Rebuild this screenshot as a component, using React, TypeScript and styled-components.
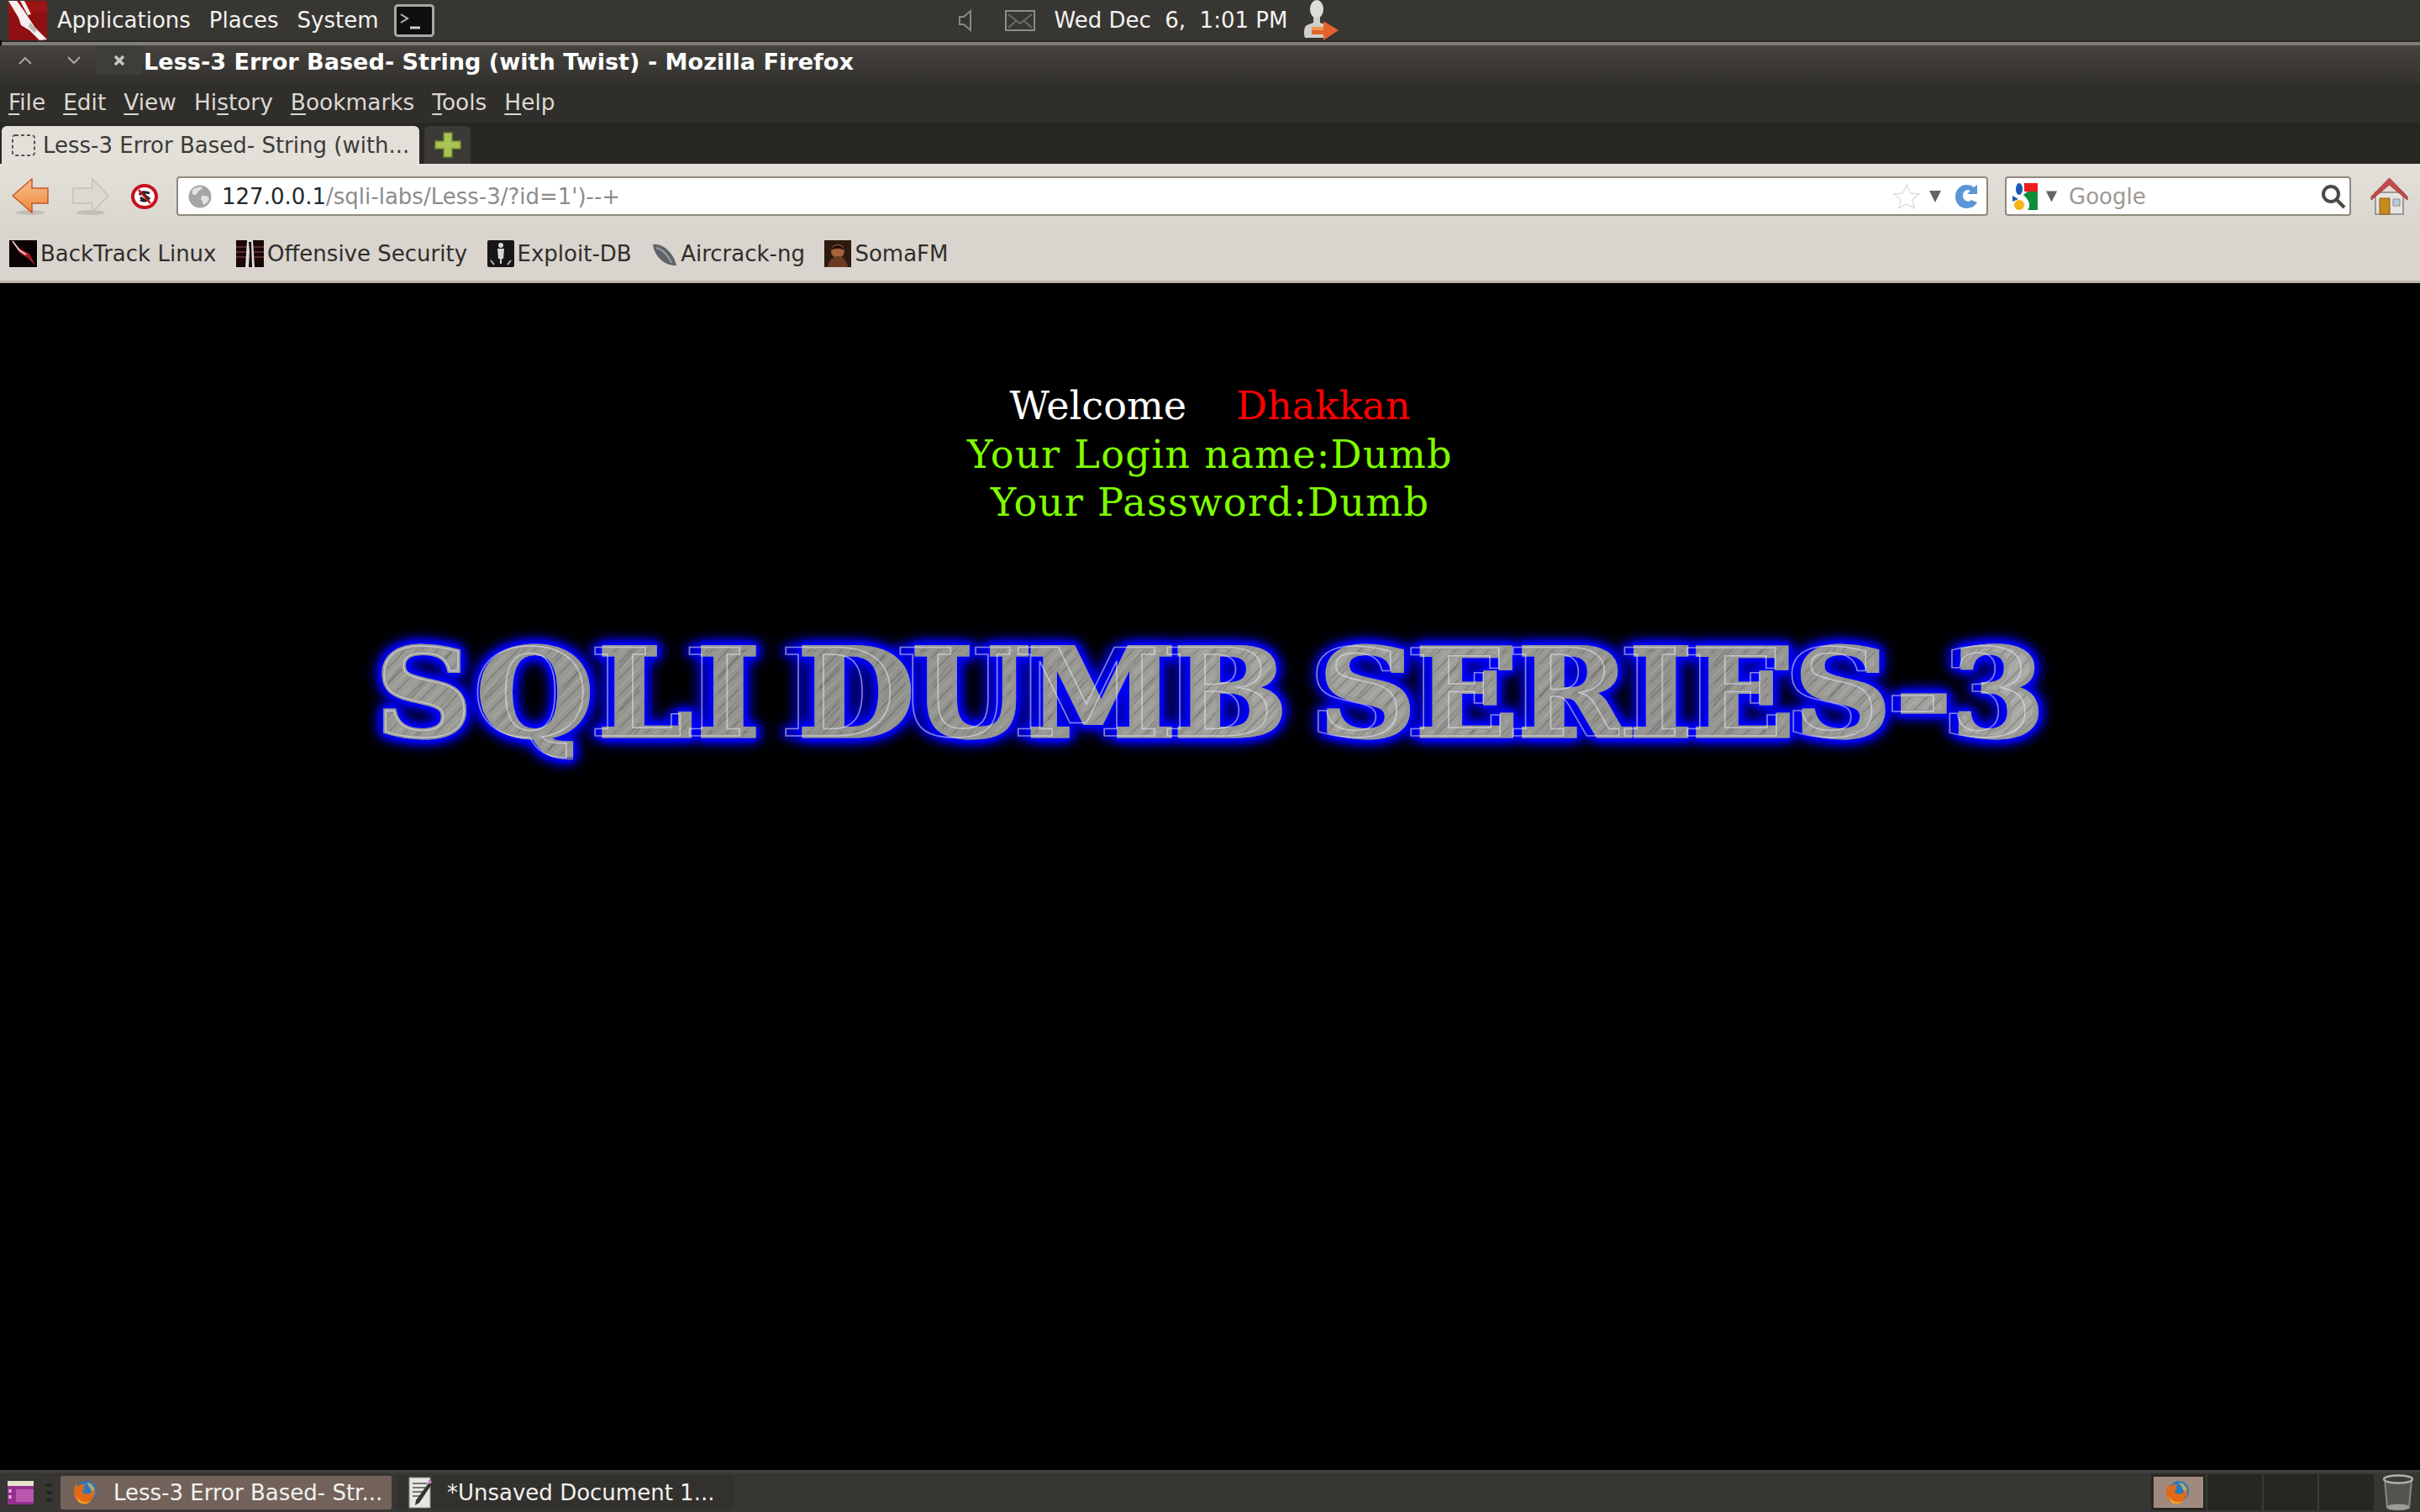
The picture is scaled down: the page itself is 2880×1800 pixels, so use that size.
import React from "react";
import styled, { createGlobalStyle } from "styled-components";

const GlobalStyle = createGlobalStyle`
  html, body {
    margin: 0;
    padding: 0;
    background: #000;
  }
  body {
    font-family: "DejaVu Sans", sans-serif;
  }
`;

const Screen = styled.div`
  width: 2880px;
  height: 1800px;
  display: flex;
  flex-direction: column;
  overflow: hidden;
  background: #000;
`;

const TopPanel = styled.div`
  height: 48px;
  flex: none;
  display: flex;
  align-items: center;
  padding-left: 10px;
  background: #383632;
  color: #f2f2f0;
  font-size: 26px;
`;

const PanelMenu = styled.div`
  display: flex;
  align-items: center;
  gap: 22px;
  margin-left: 12px;
`;

const TerminalSlot = styled.div`
  margin-left: -3px;
  display: flex;
`;

const PanelClock = styled.span`
  margin: 0 25px 0 22px;
  width: 272px;
  white-space: pre;
`;

const PanelStatus = styled.div`
  margin-left: 624px;
  display: flex;
  gap: 40px;
  align-items: center;
`;

const WindowEdge = styled.div`
  height: 6px;
  flex: none;
  background: linear-gradient(#2a2926 0 2px, #7f7d79 2px 100%);
  margin-left: 2px;
`;

const TitleBar = styled.div`
  height: 46px;
  flex: none;
  display: flex;
  align-items: flex-start;
  padding-top: 1px;
  box-sizing: border-box;
  background: linear-gradient(#45423e, #33312e);
`;

const WindowButton = styled.div<{ $width: number; $active?: boolean }>`
  width: ${(p) => p.$width}px;
  height: 34px;
  display: flex;
  align-items: center;
  justify-content: center;
  flex: none;
  background: ${(p) => (p.$active ? "#3f3d39" : "transparent")};
  border-radius: 4px;
`;

const WindowTitle = styled.span`
  margin-left: 2px;
  font-weight: bold;
  font-size: 27.1px;
  line-height: 38px;
  color: #fff;
  white-space: nowrap;
`;

const MenuBar = styled.div`
  height: 46px;
  flex: none;
  box-sizing: border-box;
  display: flex;
  align-items: center;
  gap: 21px;
  padding: 0 0 3px 10px;
  background: #302e2b;
  color: #dcd9d2;
  font-size: 26.4px;

  u {
    text-underline-offset: 4px;
    text-decoration-thickness: 2px;
  }
`;

const TabStrip = styled.div`
  height: 49px;
  flex: none;
  display: flex;
  align-items: flex-end;
  gap: 6px;
  padding-left: 2px;
  background: #282724;
`;

const ActiveTab = styled.div`
  width: 497px;
  height: 45px;
  box-sizing: border-box;
  display: flex;
  align-items: center;
  gap: 9px;
  padding-left: 12px;
  border-radius: 6px 6px 0 0;
  background: #e3e0da;
  color: #3c3b37;
  font-size: 26px;
  white-space: nowrap;
`;

const NewTabButton = styled.div`
  width: 55px;
  height: 45px;
  display: flex;
  align-items: center;
  justify-content: center;
  border-radius: 6px 6px 0 0;
  background: #3b3936;
`;

const NavBar = styled.div`
  height: 78px;
  flex: none;
  display: flex;
  align-items: center;
  padding: 15px 0 16px 14px;
  box-sizing: border-box;
  background: linear-gradient(#e3e0da, #dad6cf);
`;

const NavIcon = styled.div<{ $left: number }>`
  margin-left: ${(p) => p.$left}px;
  flex: none;
  display: flex;
`;

const UrlField = styled.div<{ $width: number; $left: number }>`
  width: ${(p) => p.$width}px;
  height: 47px;
  margin-left: ${(p) => p.$left}px;
  box-sizing: border-box;
  flex: none;
  display: flex;
  align-items: center;
  background: #fff;
  border: 2px solid #8f887c;
  border-radius: 4px;
  font-size: 26px;
`;

const UrlText = styled.span`
  flex: 1;
  margin-left: 12px;
  color: #8c8c8c;
  white-space: nowrap;

  b {
    font-weight: normal;
    color: #23282e;
  }
`;

const SearchHint = styled.span`
  flex: 1;
  margin-left: 13px;
  color: #9d9891;
`;

const BookmarkBar = styled.div`
  height: 64px;
  flex: none;
  box-sizing: border-box;
  display: flex;
  align-items: center;
  gap: 23.500px;
  padding: 0 0 3px 11px;
  background: #d9d4cd;
  border-bottom: 3px solid #bdb5aa;
  color: #2f2e2b;
  font-size: 26px;
`;

const Bookmark = styled.div`
  display: flex;
  align-items: center;
  gap: 4px;
  white-space: nowrap;
`;

const Page = styled.div`
  flex: 1;
  min-height: 0;
  display: flex;
  flex-direction: column;
  align-items: center;
  padding-top: 118px;
  background: #000;
  font-family: "DejaVu Serif", serif;
  font-size: 46.2px;
  line-height: 57.7px;
`;

const PageLine = styled.div<{ $color: string; $spacing?: number }>`
  color: ${(p) => p.$color};
  letter-spacing: ${(p) => p.$spacing ?? 0}px;
  white-space: pre;
`;

const Red = styled.span`
  color: #ff0000;
`;

const Banner = styled.div`
  position: relative;
  margin-top: 122px;
  font-family: "DejaVu Serif", serif;
  font-weight: bold;
  font-size: 145px;
  line-height: 151px;
  white-space: pre;
  word-spacing: -14px;
  transform: scaleX(1.1);
  color: transparent;
  -webkit-text-stroke: 5px rgba(150, 150, 146, 0.7);
  background:
    repeating-linear-gradient(132deg, rgba(70, 70, 66, 0.26) 0 2px, transparent 2px 7px, rgba(235, 235, 230, 0.12) 7px 9px, transparent 9px 13px),
    repeating-linear-gradient(128deg, transparent 0 17px, rgba(60, 60, 58, 0.16) 17px 20px, transparent 20px 31px),
    linear-gradient(100deg, #9d9d98, #91918c 30%, #a5a5a0 55%, #91918e 78%, #ababa7);
  -webkit-background-clip: text;
  background-clip: text;
  filter: drop-shadow(0 0 3px #0000ff) drop-shadow(0 0 4px #0000ff) drop-shadow(0 0 5px #0000ff) drop-shadow(0 0 7px #0000c8);

  &::after {
    content: attr(data-text);
    position: absolute;
    inset: 0;
    -webkit-text-stroke: 1.5px rgba(235, 235, 255, 0.55);
  }
`;

const BannerWord = styled.span<{ $spacing: number }>`
  letter-spacing: ${(p) => p.$spacing}px;
`;

const BottomPanel = styled.div`
  height: 50px;
  flex: none;
  box-sizing: border-box;
  display: flex;
  align-items: center;
  padding-left: 9px;
  background: #383632;
  border-top: 3px solid #45433f;
  color: #f2f2f0;
  font-size: 26px;
`;

const Handle = styled.div`
  width: 7px;
  height: 22px;
  margin: 0 10px 0 15px;
  flex: none;
  background: repeating-linear-gradient(#25241f 0 4px, transparent 4px 9px);
`;

const TaskButton = styled.div<{ $width: number; $active?: boolean }>`
  width: ${(p) => p.$width}px;
  height: 40px;
  margin-right: 6px;
  box-sizing: border-box;
  flex: none;
  display: flex;
  align-items: center;
  gap: 17px;
  padding-left: 14px;
  background: ${(p) => (p.$active ? "#72625a" : "#33312e")};
  border-radius: 2px;
  white-space: nowrap;
`;

const Spacer = styled.div`
  flex: 1;
`;

const Pager = styled.div`
  width: 265px;
  height: 43px;
  flex: none;
  display: grid;
  grid-template-columns: repeat(4, 1fr);
  gap: 2px;
  box-sizing: border-box;
  background: #3b3935;
  border-radius: 3px;
`;

const Workspace = styled.div<{ $active?: boolean }>`
  display: flex;
  align-items: center;
  justify-content: center;
  background: ${(p) => (p.$active ? "#a08a7e" : "#272623")};
  border: ${(p) => (p.$active ? "3px solid #272623" : "0")};
`;

const TrashSlot = styled.div`
  margin: 0 8px 0 11px;
  display: flex;
`;

const BackTrackLogo = () => (
  <svg width="46" height="47" viewBox="0 0 46 47">
    <rect width="46" height="47" fill="#8e1010" />
    <rect width="46" height="14" fill="#a81818" opacity=".6" />
    <path d="M0 0h10l10 14 12 18 14 14-9 1-12-12-10-6L12 20z" fill="#f4f0ee" />
    <path d="M14 0h5l8 16-4 1z" fill="#f4f0ee" />
    <path d="M26 26l8 8-3 4-7-7z" fill="#bdb8b4" />
  </svg>
);

const TerminalIcon = () => (
  <svg width="48" height="39" viewBox="0 0 48 39">
    <rect x="1.500" y="1.500" width="45" height="36" rx="3" fill="#0d0f10" stroke="#a9a8a4" strokeWidth="3" />
    <path d="M8 12l8 5-8 5" fill="none" stroke="#b9b9b4" strokeWidth="2" />
    <path d="M19 28h12" stroke="#d0d0cc" strokeWidth="3" />
  </svg>
);

const SpeakerIcon = () => (
  <svg width="15" height="27" viewBox="0 0 15 27">
    <path d="M1 9h5l8-7v23l-8-7H1z" fill="none" stroke="#8a8883" strokeWidth="2" />
  </svg>
);

const MailIcon = () => (
  <svg width="36" height="25" viewBox="0 0 36 25">
    <rect x="1" y="1" width="34" height="23" fill="none" stroke="#8f8d88" strokeWidth="2" />
    <path d="M4 5l14 11L32 5M4 21l9-8M32 21l-9-8" fill="none" stroke="#6d6b66" strokeWidth="2" />
  </svg>
);

const UserSwitchIcon = () => (
  <svg width="42" height="48" viewBox="0 0 42 48">
    <ellipse cx="16" cy="11" rx="8" ry="11" fill="#dcdcd9" />
    <path d="M12 20h8v7l8 3v15H2c-2-6-1-13 2-15l8-3z" fill="#cfcfcb" />
    <path d="M10 32h14v-7l18 11-18 12v-7H10z" fill="#e2642a" />
    <path d="M10 32h14v4H10z" fill="#f19454" />
  </svg>
);

const DropMark = ({ size = 16 }: { size?: number }) => (
  <svg width={size} height="17" viewBox="0 0 16 17">
    <path d="M1 2h14L8 16z" fill="#66645f" />
  </svg>
);

const Caret = ({ up }: { up?: boolean }) => (
  <svg width="16" height="10" viewBox="0 0 16 10">
    <path d={up ? "M1 9l7-7 7 7" : "M1 1l7 7 7-7"} fill="none" stroke="#a9a7a2" strokeWidth="2" />
  </svg>
);

const CloseGlyph = () => (
  <svg width="14" height="14" viewBox="0 0 14 14">
    <path d="M2 2l10 10M12 2L2 12" stroke="#c9c7c2" strokeWidth="3.400" />
  </svg>
);

const BlankFavicon = () => (
  <svg width="28" height="26" viewBox="0 0 28 26">
    <rect x="1" y="1" width="26" height="24" rx="3" fill="none" stroke="#55534f" strokeWidth="2" strokeDasharray="4 3" />
  </svg>
);

const PlusIcon = () => (
  <svg width="32" height="31" viewBox="0 0 32 31">
    <path d="M11 1h10v10h10v9H21v10H11V20H1v-9h10z" fill="#a9c256" stroke="#6e8a2c" strokeWidth="1.500" />
  </svg>
);

const ArrowIcon = ({ forward }: { forward?: boolean }) => (
  <svg width="44" height="44" viewBox="0 0 44 44">
    <ellipse cx="22" cy="41" rx="17" ry="3" fill="#000" opacity=".12" />
    <defs>
      <linearGradient id="backFill" x1="0" y1="0" x2="0" y2="1">
        <stop offset="0" stopColor="#f7c08a" />
        <stop offset="1" stopColor="#ee8a3c" />
      </linearGradient>
    </defs>
    {forward ? (
      <path d="M1 12h23V1l19 20-19 20V30H1z" fill="#dcd9d3" stroke="#c4c0b9" strokeWidth="1.500" />
    ) : (
      <path d="M43 12H24V1L1 21l23 20V30h19z" fill="url(#backFill)" stroke="#c9562a" strokeWidth="1.500" />
    )}
  </svg>
);

const StopIcon = () => (
  <svg width="32" height="30" viewBox="0 0 32 30">
    <ellipse cx="16" cy="15" rx="14" ry="13" fill="#fff" stroke="#c8101c" strokeWidth="4" />
    <path d="M10 13c3-5 8-3 12-2M11 19c4 2 8 1 11-3M13 10l8 8M11 16l6 4" fill="none" stroke="#222" strokeWidth="3" />
    <path d="M9 7l14 16" stroke="#c8101c" strokeWidth="2.500" />
  </svg>
);

const GlobeIcon = () => (
  <svg width="28" height="28" viewBox="0 0 28 28">
    <circle cx="14" cy="14" r="13.500" fill="#a5a5a5" />
    <path d="M6 5c4-2 8-3 11-2-1 3-3 3-5 5s-2 5-5 4-3-4-1-7zM16 13c4-1 7 0 9 3-1 4-4 7-7 8-1-3-1-5-3-7z" fill="#e2e2e2" />
  </svg>
);

const StarIcon = () => (
  <svg width="32" height="30" viewBox="0 0 32 30">
    <path d="M16 1l4.500 10 10.500 1-8 7 2.500 10L16 24 6.500 29 9 19l-8-7 10.500-1z" fill="#fff" stroke="#dedede" strokeWidth="1.500" />
  </svg>
);

const ReloadIcon = () => (
  <svg width="28" height="29" viewBox="0 0 28 29">
    <path d="M27 1v11H15l4-4c-5-2-9 1-9 6s5 8 9 6l1-1 7 3c-3 5-8 7-13 7C7 29 1 23 1 15S7 1 14 1c4 0 7 1 9 3z" fill="#5a97d6" />
  </svg>
);

const GoogleIcon = () => (
  <svg width="32" height="32" viewBox="0 0 32 32">
    <ellipse cx="9" cy="7" rx="4" ry="7" fill="#1b59b5" />
    <path d="M15 0h16v10H15z" fill="#ee1c1c" />
    <path d="M1 15l7 4-7 3z" fill="#1b59b5" />
    <path d="M14 14l5-4h12v22H19c3-4 4-10-5-18z" fill="#0f8d3b" />
    <circle cx="9" cy="26" r="6" fill="#f4b412" />
  </svg>
);

const SearchIcon = () => (
  <svg width="30" height="30" viewBox="0 0 30 30">
    <circle cx="12" cy="12" r="9" fill="#fff" stroke="#4a4a48" strokeWidth="4" />
    <path d="M18 18l10 10" stroke="#4a4a48" strokeWidth="4" />
  </svg>
);

const HomeIcon = () => (
  <svg width="45" height="46" viewBox="0 0 45 46">
    <path d="M6 18h33v26H6z" fill="#e6e4e0" stroke="#9c9a96" strokeWidth="2" />
    <path d="M11 25h12v19H11z" fill="#c98a1e" stroke="#8e5c10" />
    <path d="M27 26h8v8h-8z" fill="#b8ccda" stroke="#8a8a88" />
    <path d="M1 23L22.500 1 44 23v4L22.500 9 1 27z" fill="#c14a4c" stroke="#a83134" />
  </svg>
);

const BackTrackMark = () => (
  <svg width="33" height="32" viewBox="0 0 33 32">
    <rect width="33" height="32" fill="#0a0304" />
    <path d="M3 1l10 9 11 6 7 14-9-9-9-5z" fill="#a8202c" />
    <path d="M4 1l8 11 8 5" fill="none" stroke="#e9dfe0" strokeWidth="1.500" />
  </svg>
);

const OffSecMark = () => (
  <svg width="33" height="32" viewBox="0 0 33 32">
    <rect width="33" height="32" fill="#1a0709" />
    <path d="M0 8h33M0 14h33M0 20h33" stroke="#6b3a3a" strokeWidth="1.500" />
    <path d="M13 0h7l2 32h-4l-2-20-1 20h-4z" fill="#e0dcdc" />
    <path d="M15 2h3l1 30h-2l-1-18z" fill="#1a0709" />
  </svg>
);

const ExploitMark = () => (
  <svg width="32" height="32" viewBox="0 0 32 32">
    <rect width="32" height="32" rx="2" fill="#161616" />
    <circle cx="16" cy="6" r="3" fill="#d8d8d8" />
    <path d="M12 10h8l-1 12h-2v6h-2v-6h-2z" fill="#d8d8d8" />
    <path d="M4 24l4 5M28 24l-4 5" stroke="#bcbcbc" strokeWidth="2" />
  </svg>
);

const AircrackMark = () => (
  <svg width="31" height="32" viewBox="0 0 31 32">
    <path d="M2 5C14 3 27 16 30 30 18 31 4 21 2 5z" fill="#5f6468" />
    <path d="M6 9c8 2 15 10 18 18" fill="none" stroke="#9aa0a6" strokeWidth="2" />
  </svg>
);

const SomaMark = () => (
  <svg width="32" height="32" viewBox="0 0 32 32">
    <rect width="32" height="32" fill="#2c1a10" />
    <circle cx="16" cy="13" r="8" fill="#a8623a" />
    <path d="M4 32c1-9 7-13 12-13s11 4 12 13z" fill="#6a3a22" />
    <path d="M8 12c2-7 13-8 16 0-5-3-11-3-16 0z" fill="#1a0e08" />
  </svg>
);

const DesktopIcon = () => (
  <svg width="31" height="28" viewBox="0 0 31 28">
    <rect width="31" height="28" fill="#93308f" />
    <rect width="31" height="6" fill="#e6e3cc" />
    <rect x="10" y="10" width="21" height="15" fill="#b857ae" />
    <path d="M3 10v14" stroke="#e6b8e0" strokeWidth="3" strokeDasharray="4 3" />
  </svg>
);

const FirefoxIcon = ({ size }: { size: number }) => (
  <svg width={size} height={size} viewBox="0 0 32 32">
    <circle cx="17" cy="14" r="12" fill="#2a78bb" />
    <path d="M17 4c5 0 10 5 10 10 0 3-1 5-2 7-1-6-3-10-8-17z" fill="#e8c24a" opacity=".7" />
    <path d="M5 5c0 3 2 4 3 3 2-2 5-3 8-1-3 1-3 3-1 4-2 1-4 2-2 5 2 2 6 2 9 0 3-2 4-4 5-5 1 9-5 18-13 18C7 29 1 22 2 15c0-4 1-7 3-10z" fill="#e06a17" />
    <path d="M5 20c3 6 10 9 17 6-3 3-6 4-10 3-4 0-6-4-7-9z" fill="#f4a127" />
  </svg>
);

const LeafpadIcon = () => (
  <svg width="29" height="38" viewBox="0 0 29 38">
    <rect x="1" y="1" width="25" height="36" fill="#e7e7e2" stroke="#8c8c88" />
    <path d="M5 8h17M5 13h17M5 18h12M5 23h9" stroke="#75756f" strokeWidth="2" />
    <path d="M25 6l3 3-15 22-5 3 1-6z" fill="#35342f" />
    <path d="M25 3l3 3-2 3-3-3z" fill="#c888c0" />
  </svg>
);

const TrashIcon = () => (
  <svg width="36" height="44" viewBox="0 0 36 44">
    <path d="M2 6h32l-3 34c-4 3-22 3-26 0z" fill="#55534f" stroke="#8a8985" strokeWidth="2" />
    <ellipse cx="18" cy="6" rx="17" ry="4.500" fill="#3d3b38" stroke="#b0afab" strokeWidth="2.500" />
    <ellipse cx="18" cy="39" rx="13" ry="3.500" fill="#9c9b97" />
  </svg>
);

const App: React.FC = () => {
  return (
    <Screen>
      <GlobalStyle />
      <TopPanel>
        <BackTrackLogo />
        <PanelMenu>
          <span>Applications</span>
          <span>Places</span>
          <span>System</span>
          <TerminalSlot>
            <TerminalIcon />
          </TerminalSlot>
        </PanelMenu>
        <PanelStatus>
          <SpeakerIcon />
          <MailIcon />
        </PanelStatus>
        <PanelClock>Wed Dec  6,  1:01 PM</PanelClock>
        <UserSwitchIcon />
      </TopPanel>
      <WindowEdge />
      <TitleBar>
        <WindowButton $width={60}>
          <Caret up />
        </WindowButton>
        <WindowButton $width={55}>
          <Caret />
        </WindowButton>
        <WindowButton $width={54} $active>
          <CloseGlyph />
        </WindowButton>
        <WindowTitle>Less-3 Error Based- String (with Twist) - Mozilla Firefox</WindowTitle>
      </TitleBar>
      <MenuBar>
        <span><u>F</u>ile</span>
        <span><u>E</u>dit</span>
        <span><u>V</u>iew</span>
        <span>Hi<u>s</u>tory</span>
        <span><u>B</u>ookmarks</span>
        <span><u>T</u>ools</span>
        <span><u>H</u>elp</span>
      </MenuBar>
      <TabStrip>
        <ActiveTab>
          <BlankFavicon />
          Less-3 Error Based- String (with...
        </ActiveTab>
        <NewTabButton>
          <PlusIcon />
        </NewTabButton>
      </TabStrip>
      <NavBar>
        <NavIcon $left={0}><ArrowIcon /></NavIcon>
        <NavIcon $left={28}><ArrowIcon forward /></NavIcon>
        <NavIcon $left={26}><StopIcon /></NavIcon>
        <UrlField $width={2156} $left={22}>
          <NavIcon $left={12}><GlobeIcon /></NavIcon>
          <UrlText><b>127.0.0.1</b>/sqli-labs/Less-3/?id=1')--+</UrlText>
          <StarIcon />
          <NavIcon $left={10}><DropMark /></NavIcon>
          <NavIcon $left={15}><ReloadIcon /></NavIcon>
          <NavIcon $left={10}><span /></NavIcon>
        </UrlField>
        <UrlField $width={412} $left={20}>
          <NavIcon $left={6}><GoogleIcon /></NavIcon>
          <NavIcon $left={8}><DropMark size={15} /></NavIcon>
          <SearchHint>Google</SearchHint>
          <SearchIcon />
          <NavIcon $left={4}><span /></NavIcon>
        </UrlField>
        <NavIcon $left={23}><HomeIcon /></NavIcon>
      </NavBar>
      <BookmarkBar>
        <Bookmark><BackTrackMark />BackTrack Linux</Bookmark>
        <Bookmark><OffSecMark />Offensive Security</Bookmark>
        <Bookmark><ExploitMark />Exploit-DB</Bookmark>
        <Bookmark><AircrackMark />Aircrack-ng</Bookmark>
        <Bookmark><SomaMark />SomaFM</Bookmark>
      </BookmarkBar>
      <Page>
        <PageLine $color="#ffffff">
          Welcome{"\u00a0\u00a0\u00a0 "}<Red>Dhakkan</Red>
        </PageLine>
        <PageLine $color="#7fff00" $spacing={1.28}>Your Login name:Dumb</PageLine>
        <PageLine $color="#7fff00" $spacing={1.28}>Your Password:Dumb</PageLine>
        <Banner data-text="SQLI DUMB SERIES-3">
          <BannerWord $spacing={5}>SQLI</BannerWord> <BannerWord $spacing={-2}>DUMB</BannerWord> <BannerWord $spacing={0}>SERIES-3</BannerWord>
        </Banner>
      </Page>
      <BottomPanel>
        <DesktopIcon />
        <Handle />
        <TaskButton $width={394} $active>
          <FirefoxIcon size={32} />
          Less-3 Error Based- Str...
        </TaskButton>
        <TaskButton $width={401}>
          <LeafpadIcon />
          *Unsaved Document 1...
        </TaskButton>
        <Spacer />
        <Pager>
          <Workspace $active><FirefoxIcon size={32} /></Workspace>
          <Workspace />
          <Workspace />
          <Workspace />
        </Pager>
        <TrashSlot><TrashIcon /></TrashSlot>
      </BottomPanel>
    </Screen>
  );
};

export default App;
